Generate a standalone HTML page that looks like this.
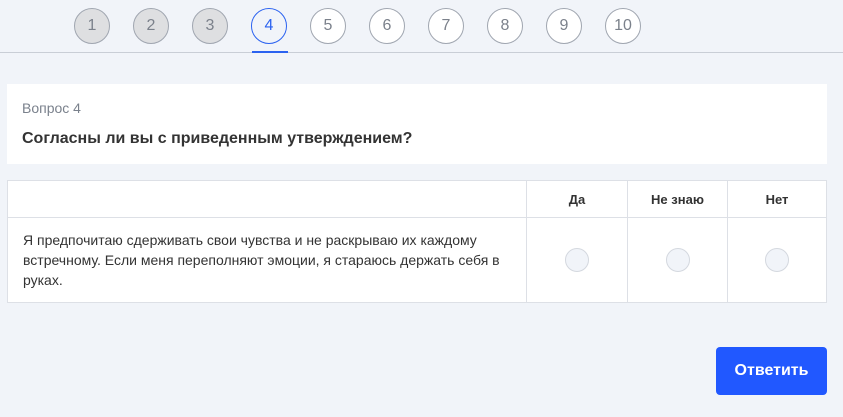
<!DOCTYPE html>
<html><head><meta charset="utf-8"><style>
*{box-sizing:border-box;margin:0;padding:0}
body{width:843px;height:417px;background:#f1f4f9;font-family:"Liberation Sans Narrow","Liberation Sans",sans-serif;position:relative;overflow:hidden;color:#333}
.hdr{position:absolute;left:0;top:0;width:843px;height:53px;border-bottom:1px solid #c9ced6}
.c{position:absolute;top:8px;width:36px;height:36px;border-radius:50%;border:1px solid #a0a6b0;background:#fff;color:#7b818b;font-size:16px;text-align:center;line-height:34px}
.c.d{background:#dedfe1}
.c.a{border-color:#2b62f0;color:#2b62f0;background:#f1f4f9}
.ul{position:absolute;left:252px;top:51px;width:36px;height:2px;background:#2b62f0}
.card{position:absolute;left:7px;top:84px;width:820px;height:80px;background:#fff}
.q{position:absolute;left:15px;top:16px;font-size:14px;color:#7a818c}
.t{position:absolute;left:15px;top:46px;font-size:16px;font-weight:bold;color:#333}
table{position:absolute;left:7px;top:180px;width:820px;border-collapse:collapse;background:#fff}
td,th{border:1px solid #dde0e6}
th{height:37px;font-size:13px;font-weight:bold;color:#333}
td{height:85px}
.tx{padding:0 15px;font-size:14px;line-height:20px;color:#333}
.r{display:block;margin:0 auto;width:24px;height:24px;border-radius:50%;border:1px solid #d4d8df;background:#f1f4f9}
.btn{position:absolute;left:716px;top:347px;width:111px;height:48px;background:#2158ff;border-radius:4px;color:#fff;font-weight:bold;font-size:16px;text-align:center;line-height:48px}
</style></head><body>
<div class="hdr">
<div class="c d" style="left:74px">1</div>
<div class="c d" style="left:133px">2</div>
<div class="c d" style="left:192px">3</div>
<div class="c a" style="left:251px">4</div>
<div class="c" style="left:310px">5</div>
<div class="c" style="left:369px">6</div>
<div class="c" style="left:428px">7</div>
<div class="c" style="left:487px">8</div>
<div class="c" style="left:546px">9</div>
<div class="c" style="left:605px">10</div>
<div class="ul"></div>
</div>
<div class="card"><div class="q">Вопрос 4</div><div class="t">Согласны ли вы с приведенным утверждением?</div></div>
<table>
<tr><th style="width:519px"></th><th style="width:101px">Да</th><th style="width:100px">Не знаю</th><th>Нет</th></tr>
<tr><td class="tx">Я предпочитаю сдерживать свои чувства и не раскрываю их каждому встречному. Если меня переполняют эмоции, я стараюсь держать себя в руках.</td><td><span class="r"></span></td><td><span class="r"></span></td><td><span class="r"></span></td></tr>
</table>
<div class="btn">Ответить</div>
</body></html>
